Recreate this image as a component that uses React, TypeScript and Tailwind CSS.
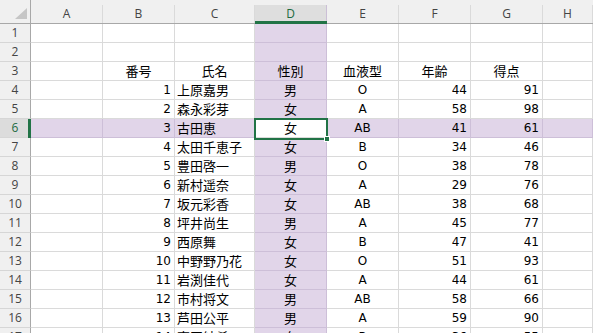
import React from "react";

const colW = ["w-[72px]", "w-[72px]", "w-[80px]", "w-[72px]", "w-[72px]", "w-[72px]", "w-[72px]", "flex-1"];
const letters = ["A", "B", "C", "D", "E", "F", "G", "H"];

type Row = (string | number)[];

const data: Row[] = [
  [1, "上原嘉男", "男", "O", 44, 91],
  [2, "森永彩芽", "女", "A", 58, 98],
  [3, "古田恵", "女", "AB", 41, 61],
  [4, "太田千恵子", "女", "B", 34, 46],
  [5, "豊田啓一", "男", "O", 38, 78],
  [6, "新村遥奈", "女", "A", 29, 76],
  [7, "坂元彩香", "女", "AB", 38, 68],
  [8, "坪井尚生", "男", "A", 45, 77],
  [9, "西原舞", "女", "B", 47, 41],
  [10, "中野野乃花", "女", "O", 51, 93],
  [11, "岩渕佳代", "女", "A", 44, 61],
  [12, "市村将文", "男", "AB", 58, 66],
  [13, "芦田公平", "男", "A", 59, 90],
  [14, "高田紗希", "女", "B", 36, 55],
];

const jp = "font-['Noto_Sans_CJK_JP',sans-serif] text-[13px]";
const lat = "font-['DejaVu_Sans','Noto_Sans_CJK_JP',sans-serif] text-[12px]";

function cellsFor(r: number): { text: string; align: string; font: string }[] {
  const empty = { text: "", align: "", font: jp };
  if (r === 3) {
    return [
      empty,
      { text: "番号", align: "justify-center", font: jp },
      { text: "氏名", align: "justify-center", font: jp },
      { text: "性別", align: "justify-center", font: jp },
      { text: "血液型", align: "justify-center", font: jp },
      { text: "年齢", align: "justify-center", font: jp },
      { text: "得点", align: "justify-center", font: jp },
      empty,
    ];
  }
  const d = data[r - 4];
  if (!d) return Array(8).fill(empty);
  return [
    empty,
    { text: String(d[0]), align: "justify-end pr-[3px]", font: lat },
    { text: String(d[1]), align: "justify-start pl-[2px]", font: jp },
    { text: String(d[2]), align: "justify-center", font: jp },
    { text: String(d[3]), align: "justify-center", font: lat },
    { text: String(d[4]), align: "justify-end pr-[3px]", font: lat },
    { text: String(d[5]), align: "justify-end pr-[3px]", font: lat },
    empty,
  ];
}

export default function App() {
  const rows = Array.from({ length: 17 }, (_, i) => i + 1);
  return (
    <div className="w-[593px] h-[333px] overflow-hidden bg-white text-black">
      {/* column headers */}
      <div className="flex h-[24px] bg-[#f0f0f0] border-b border-[#a8a8a8]">
        <div className="relative w-[31px] shrink-0 border-r border-[#a8a8a8]">
          <svg className="absolute left-[15px] top-[8px]" width="12" height="11" viewBox="0 0 12 11">
            <polygon points="12,0 12,11 0,11" fill="#c6c6c6" />
          </svg>
        </div>
        {letters.map((l, i) => (
          <div
            key={l}
            className={`relative ${colW[i]} shrink-0 mt-[5px] flex items-center justify-center font-['Open_Sans',sans-serif] text-[12px] border-r ${
              i === 3 ? "bg-[#dedede] text-[#1d6a40] border-[#cbbfd6]" : "text-[#444] border-[#dadada]"
            }`}
          >
            {l}
            {i === 3 && <div className="absolute left-0 right-[-1px] bottom-[-1px] h-[3px] bg-[#217346]" />}
          </div>
        ))}
      </div>

      {rows.map((r) => {
        const cells = cellsFor(r);
        const sel = r === 6;
        return (
          <div key={r} className="flex h-[19px]">
            <div
              className={`relative w-[31px] shrink-0 flex items-center justify-center font-['Open_Sans',sans-serif] text-[12px] border-r border-b border-r-[#a8a8a8] border-b-[#d6d6d6] ${
                sel ? "bg-[#dcdcdc] text-[#1d6a40]" : "bg-[#f0f0f0] text-[#444]"
              }`}
            >
              {r}
              {sel && <div className="absolute right-[-1px] top-0 bottom-[-1px] w-[3px] bg-[#217346]" />}
            </div>
            {cells.map((c, i) => {
              const isD = i === 3;
              const active = sel && isD;
              let bg = "bg-white";
              let bc = "border-[#dadada]";
              if (active) {
                bg = "bg-white";
                bc = "border-[#dadada]";
              } else if (isD || sel) {
                bg = "bg-[#e1d5e9]";
                bc = "border-[#cdbfd8]";
              }
              return (
                <div
                  key={i}
                  className={`relative ${colW[i]} shrink-0 flex items-center whitespace-nowrap leading-[18px] border-r border-b ${bg} ${bc} ${c.align} ${c.font}`}
                >
                  {c.text}
                  {active && (
                    <div className="absolute left-[-1px] top-[-1px] w-[74px] h-[22px] border-2 border-[#217346] z-10">
                      <div className="absolute right-[-4px] bottom-[-4px] w-[6px] h-[6px] bg-[#217346] border border-white" />
                    </div>
                  )}
                </div>
              );
            })}
          </div>
        );
      })}
    </div>
  );
}
